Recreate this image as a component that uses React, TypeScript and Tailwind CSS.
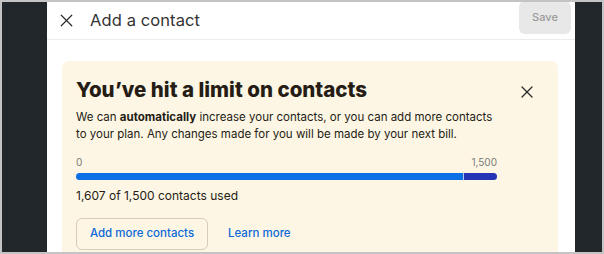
import { X } from "lucide-react";

export default function App() {
  return (
    <div className="w-[604px] h-[254px] bg-[#c4c4c4] p-[2px] pr-[2px] overflow-hidden">
      <div className="flex h-full bg-[#22272b]">
        <div className="w-[45px] shrink-0" />
        <div className="flex-1 bg-white flex flex-col overflow-hidden font-['Inter',sans-serif] text-[#241c15]">
          {/* Header */}
          <div className="h-[38px] shrink-0 flex items-center border-b border-[#ececec] pl-[9px] pr-[4px]">
            <X size={21} strokeWidth={1.4} className="text-[#2a2a2a]" />
            <span className="ml-[13px] text-[16.5px] text-[#333] tracking-[0.1px]">Add a contact</span>
            <button
              type="button"
              className="ml-auto mt-[-6px] h-[33px] w-[52px] rounded-[6px] bg-[#e8e8e8] text-[11px] font-medium text-[#9a9a9a]"
            >
              Save
            </button>
          </div>

          {/* Limit banner */}
          <div className="mt-[21px] ml-[15px] mr-[17px] rounded-[7px] bg-[#fdf6e4] px-[14px] pt-[16px] pb-[10px]">
            <div className="flex items-start">
              <div className="w-[421px]">
                <h2 className="text-[20.5px] leading-[26px] font-extrabold tracking-[0px] text-[#241c15]">
                  You’ve hit a limit on contacts
                </h2>
                <p className="mt-[6px] text-[11.5px] leading-[17px] text-[#241c15]">
                  We can <span className="font-bold">automatically</span> increase your contacts, or you can add more contacts to your plan. Any changes made for you will be made by your next bill.
                </p>

                {/* Usage bar */}
                <div className="mt-[13px] flex justify-between text-[10px] leading-[12px] text-[#7a7a7a]">
                  <span>0</span>
                  <span>1,500</span>
                </div>
                <div className="mt-[5px] flex h-[7px] rounded-full overflow-hidden">
                  <div className="w-[387px] bg-[#0b6fe6]" />
                  <div className="w-px bg-[#b9c6ee]" />
                  <div className="flex-1 bg-[#2535b5]" />
                </div>
                <p className="mt-[8px] text-[12px] leading-[16px]">1,607 of 1,500 contacts used</p>

                <div className="mt-[14px] flex items-center gap-[20px]">
                  <button
                    type="button"
                    className="h-[32px] w-[132px] rounded-[6px] border border-[#d6ccb8] text-[11.5px] font-medium text-[#0b69d8]"
                  >
                    Add more contacts
                  </button>
                  <a className="text-[11.5px] font-medium text-[#0b69d8]">Learn more</a>
                </div>
              </div>
              <X size={20} strokeWidth={1.5} className="ml-auto mt-[5px] mr-[7px] text-[#2a2a2a]" />
            </div>
          </div>
        </div>
        <div className="w-[27px] shrink-0" />
      </div>
    </div>
  );
}
